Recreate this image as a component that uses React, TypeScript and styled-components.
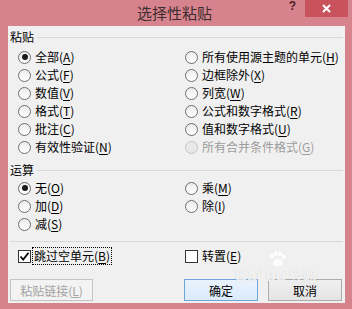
import styled, { createGlobalStyle } from "styled-components";

const GlobalStyle = createGlobalStyle`
  html, body {
    margin: 0;
    padding: 0;
  }
  body {
    font-family: "Noto Sans CJK SC", "Liberation Sans", sans-serif;
    font-size: 12px;
    color: #000;
  }
`;

type Choice = {
  label: string;
  hotkey: string;
  checked?: boolean;
  disabled?: boolean;
};

const pasteOptions: Choice[] = [
  { label: "全部", hotkey: "A", checked: true },
  { label: "所有使用源主题的单元", hotkey: "H" },
  { label: "公式", hotkey: "F" },
  { label: "边框除外", hotkey: "X" },
  { label: "数值", hotkey: "V" },
  { label: "列宽", hotkey: "W" },
  { label: "格式", hotkey: "T" },
  { label: "公式和数字格式", hotkey: "R" },
  { label: "批注", hotkey: "C" },
  { label: "值和数字格式", hotkey: "U" },
  { label: "有效性验证", hotkey: "N" },
  { label: "所有合并条件格式", hotkey: "G", disabled: true },
];

const opOptions: Choice[] = [
  { label: "无", hotkey: "O", checked: true },
  { label: "乘", hotkey: "M" },
  { label: "加", hotkey: "D" },
  { label: "除", hotkey: "I" },
  { label: "减", hotkey: "S" },
];

const RadioOption = ({ label, hotkey, checked, disabled }: Choice) => (
  <OptionLabel $disabled={disabled}>
    <RadioCircle $disabled={disabled}>{checked && <RadioDot />}</RadioCircle>
    <span>
      {label}(<u>{hotkey}</u>)
    </span>
  </OptionLabel>
);

const App = () => {
  return (
    <>
      <GlobalStyle />
      <Window>
        <TitleBar>
          <span />
          <Title>选择性粘贴</Title>
          <Controls>
            <Help>?</Help>
            <Close>
              <svg width="9" height="9" viewBox="0 0 9 9">
                <path d="M1 1 L8 8 M8 1 L1 8" stroke="#fff" strokeWidth="2" />
              </svg>
            </Close>
          </Controls>
        </TitleBar>

        <Panel>
          <GroupHeader>粘贴</GroupHeader>
          <OptionGrid $top={4}>
            {pasteOptions.map((o) => (
              <RadioOption key={o.label} {...o} />
            ))}
          </OptionGrid>

          <GroupHeader $top={7}>运算</GroupHeader>
          <OptionGrid $top={2}>
            {opOptions.map((o) => (
              <RadioOption key={o.label} {...o} />
            ))}
          </OptionGrid>

          <Separator />

          <OptionGrid $top={5}>
            <OptionLabel>
              <CheckBox>
                <svg width="11" height="11" viewBox="0 0 11 11">
                  <path
                    d="M1.5 5.5 L4.2 8.5 L9.5 1.8"
                    fill="none"
                    stroke="#000"
                    strokeWidth="1.8"
                  />
                </svg>
              </CheckBox>
              <Focused>
                跳过空单元(<u>B</u>)
              </Focused>
            </OptionLabel>
            <OptionLabel>
              <CheckBox />
              <span>
                转置(<u>E</u>)
              </span>
            </OptionLabel>
          </OptionGrid>

          <ButtonRow>
            <Button $variant="disabled" $width={83}>
              粘贴链接(<u>L</u>)
            </Button>
            <Spacer />
            <Button $variant="default">确定</Button>
            <Button>取消</Button>
          </ButtonRow>
        </Panel>

        <Watermark>
          <Paw viewBox="0 0 22 18" width="20" height="16">
            <ellipse cx="5" cy="6" rx="2.2" ry="3" />
            <ellipse cx="9.5" cy="3" rx="2.2" ry="3" />
            <ellipse cx="14.5" cy="3" rx="2.2" ry="3" />
            <ellipse cx="18.5" cy="6.5" rx="2.2" ry="3" />
            <ellipse cx="12" cy="13" rx="5.5" ry="4.2" />
          </Paw>
          <MarkText>
            Bai<MarkDu>du</MarkDu>
            <MarkCn>经验</MarkCn>
          </MarkText>
        </Watermark>
      </Window>
    </>
  );
};

const Window = styled.div`
  position: relative;
  width: 352px;
  height: 309px;
  background: #d6838d;
  display: flex;
  flex-direction: column;
  overflow: hidden;
`;

const TitleBar = styled.div`
  height: 26px;
  display: grid;
  grid-template-columns: 64px 1fr 64px;
  align-items: start;
`;

const Title = styled.div`
  text-align: center;
  font-size: 15px;
  line-height: 20px;
  padding-top: 3px;
  padding-right: 3px;
  color: #3d2c2f;
`;

const Controls = styled.div`
  display: flex;
  align-items: flex-start;
  justify-content: flex-end;
  padding-right: 4px;
`;

const Help = styled.div`
  font-family: "Liberation Sans", sans-serif;
  font-weight: bold;
  font-size: 12px;
  line-height: 13px;
  color: #4b1f25;
  margin-right: 9px;
`;

const Close = styled.div`
  width: 43px;
  height: 17px;
  background: #c8535d;
  display: flex;
  align-items: center;
  justify-content: center;
`;

const Panel = styled.div`
  flex: 1;
  margin: 0 7px 6px 8px;
  background: #f0f0f0;
  padding: 4px 2px 0 2px;
  display: flex;
  flex-direction: column;
`;

const GroupHeader = styled.div<{ $top?: number }>`
  display: flex;
  align-items: center;
  gap: 3px;
  height: 14px;
  line-height: 14px;
  margin-top: ${(p) => p.$top ?? 0}px;

  &::after {
    content: "";
    flex: 1;
    height: 1px;
    background: #d9d9d9;
  }
`;

const OptionGrid = styled.div<{ $top?: number }>`
  display: grid;
  grid-template-columns: 167px 1fr;
  grid-auto-rows: 18px;
  padding-left: 8px;
  margin-top: ${(p) => p.$top ?? 0}px;
`;

const OptionLabel = styled.label<{ $disabled?: boolean }>`
  display: flex;
  align-items: center;
  gap: 4px;
  white-space: nowrap;
  line-height: 18px;
  color: ${(p) => (p.$disabled ? "#9c9c9c" : "#000")};

  u {
    text-underline-offset: 2px;
  }
`;

const RadioCircle = styled.span<{ $disabled?: boolean }>`
  box-sizing: border-box;
  width: 13px;
  height: 13px;
  flex: none;
  border-radius: 50%;
  border: 1px solid ${(p) => (p.$disabled ? "#c4c4c4" : "#6e6e6e")};
  background: ${(p) =>
    p.$disabled ? "#e9e9e9" : "linear-gradient(#ececec, #ffffff)"};
  display: flex;
  align-items: center;
  justify-content: center;
`;

const RadioDot = styled.span`
  width: 6px;
  height: 6px;
  border-radius: 50%;
  background: #1a1a1a;
`;

const CheckBox = styled.span`
  box-sizing: border-box;
  width: 13px;
  height: 13px;
  flex: none;
  border: 1px solid #333;
  background: #fff;
  display: flex;
  align-items: center;
  justify-content: center;
`;

const Focused = styled.span`
  outline: 1px dotted #000;
  outline-offset: 0;
  padding: 0 1px;
  margin-left: -2px;
  line-height: 16px;
`;

const Separator = styled.div`
  height: 1px;
  background: #d9d9d9;
  margin-top: 8px;
`;

const ButtonRow = styled.div`
  display: flex;
  gap: 10px;
  margin-top: 14px;
  padding-right: 1px;
`;

const Spacer = styled.div`
  flex: 1;
`;

const Button = styled.div<{ $variant?: "default" | "disabled"; $width?: number }>`
  box-sizing: border-box;
  width: ${(p) => p.$width ?? 74}px;
  height: 22px;
  display: flex;
  align-items: center;
  justify-content: center;
  font-size: 12px;
  border: 1px solid
    ${(p) =>
      p.$variant === "default"
        ? "#6ea5dc"
        : p.$variant === "disabled"
        ? "#c3c3c3"
        : "#acacac"};
  background: ${(p) =>
    p.$variant === "default"
      ? "linear-gradient(#eaf3fc, #dbebfb)"
      : p.$variant === "disabled"
      ? "#f3f3f3"
      : "linear-gradient(#f0f0f0, #e4e4e4)"};
  color: ${(p) => (p.$variant === "disabled" ? "#a2a2a2" : "#000")};
`;

const Watermark = styled.div`
  position: absolute;
  left: 235px;
  top: 251px;
  width: 100px;
  pointer-events: none;
  display: flex;
  flex-direction: column;
  align-items: flex-start;
`;

const Paw = styled.svg`
  margin-left: 32px;
  fill: rgba(255, 255, 255, 0.85);
`;

const MarkText = styled.div`
  font-family: "Liberation Sans", sans-serif;
  font-weight: bold;
  font-size: 17px;
  line-height: 16px;
  color: rgba(255, 255, 255, 0.8);
  text-shadow: 0 0 1px rgba(120, 120, 120, 0.35);
  white-space: nowrap;
`;

const MarkDu = styled.span`
  margin-left: 4px;
`;

const MarkCn = styled.span`
  font-family: "Noto Sans CJK SC", sans-serif;
  font-size: 14px;
  margin-left: 3px;
`;

export default App;
